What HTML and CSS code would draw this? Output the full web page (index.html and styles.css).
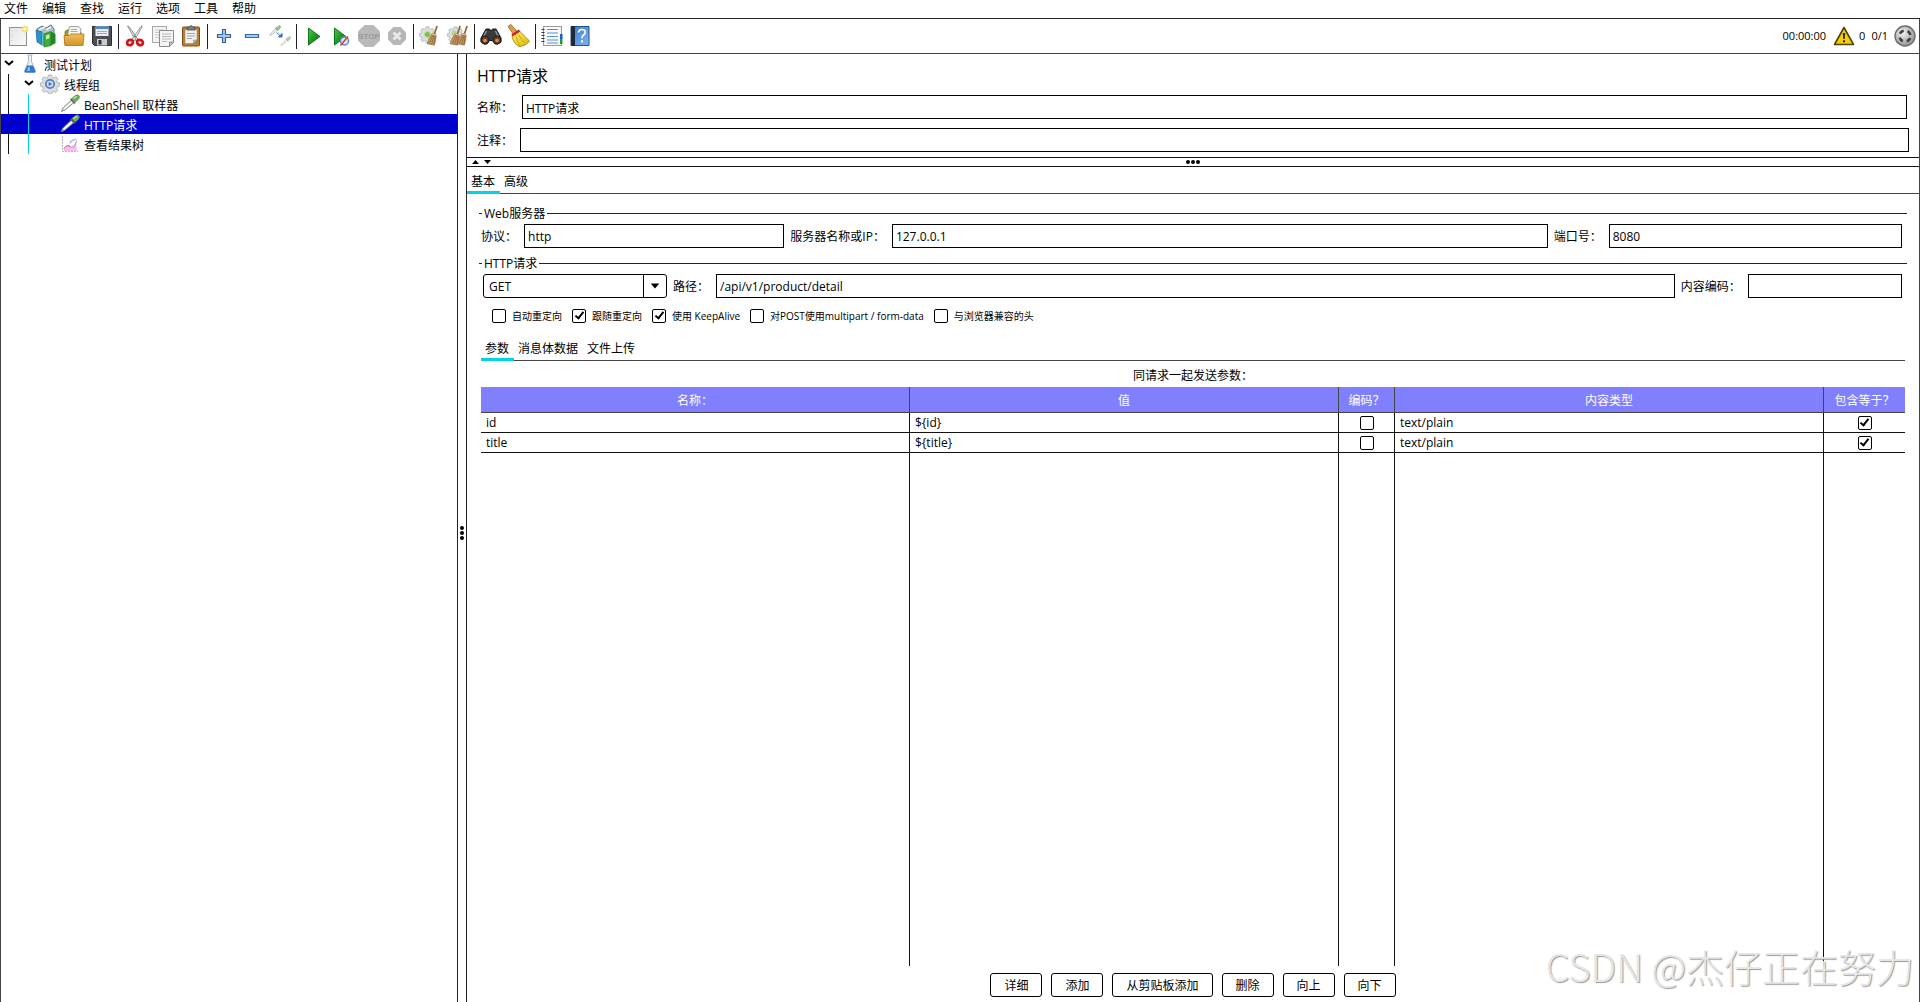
FILE: index.html
```html
<!DOCTYPE html>
<html lang="zh-CN">
<head>
<meta charset="utf-8">
<title>Apache JMeter</title>
<link rel="stylesheet" href="styles.css">
</head>
<body>
<nav class="menubar">
  <button type="button">文件</button>
  <button type="button">编辑</button>
  <button type="button">查找</button>
  <button type="button">运行</button>
  <button type="button">选项</button>
  <button type="button">工具</button>
  <button type="button">帮助</button>
</nav>

<svg class="defs" aria-hidden="true">
  <defs>
    <linearGradient id="paper" x1="0" y1="0" x2="1" y2="1"><stop offset="0" stop-color="#e4e4e4"/><stop offset="1" stop-color="#fafafa"/></linearGradient>
    <linearGradient id="green" x1="0" y1="0" x2="1" y2="1"><stop offset="0" stop-color="#5fc25a"/><stop offset=".5" stop-color="#1d9a24"/><stop offset="1" stop-color="#056b0c"/></linearGradient>
    <linearGradient id="folder" x1="0" y1="0" x2="0" y2="1"><stop offset="0" stop-color="#f0bf55"/><stop offset="1" stop-color="#d1942a"/></linearGradient>
    <linearGradient id="blue" x1="0" y1="0" x2="1" y2="1"><stop offset="0" stop-color="#3b78c8"/><stop offset="1" stop-color="#7db4f2"/></linearGradient>
    <linearGradient id="yellow" x1="0" y1="0" x2="1" y2="1"><stop offset="0" stop-color="#fff27a"/><stop offset="1" stop-color="#d9b300"/></linearGradient>
    <radialGradient id="steel" cx=".4" cy=".35" r=".7"><stop offset="0" stop-color="#f2f2f2"/><stop offset="1" stop-color="#8c8c8c"/></radialGradient>
    <symbol id="pipette" viewBox="0 0 20 20">
      <path d="M1.500 17.500 2.500 14.500 11.500 6 14 8.500 5 16z" fill="#d4d8d6" stroke="#7f8582" stroke-width=".9"/>
      <path d="M4 15 12.500 7.500" stroke="#fff" stroke-width="1.200"/>
      <path d="M10.500 5 15 9.500" stroke="#55645a" stroke-width="1.500"/>
      <path d="M11.500 4.500 15.500 1.500Q18 0 19.200 2 20 3.800 18.500 5.300L15.300 8.300z" fill="#6fab5c" stroke="#4a8440" stroke-width=".6"/>
      <path d="M13.500 4.500 17 2.300" stroke="#bfe3ae" stroke-width="1.300"/>
    </symbol>
    <symbol id="broom" viewBox="0 0 14 24">
      <path d="M12 1 9 10" stroke="#8d6232" stroke-width="1.800"/>
      <path d="M7 9 11 10.500Q11 17 9 22L1 20.500Q3 14 7 9z" fill="#c79a62" stroke="#8f6436" stroke-width=".7"/>
      <path d="M7.500 11 3.500 20M9 11 6 21M10 12 8.500 21.500" stroke="#7d562c" stroke-width=".7"/>
      <path d="M6.500 9.500 11.200 11" stroke="#e2c9a2" stroke-width="1.200"/>
    </symbol>
    <symbol id="gear" viewBox="0 0 20 20">
      <path d="M8.400 1h3.200l.5 2.300 1.700.7 2-1.300 2.200 2.300-1.300 2 .7 1.600 2.300.5v3l-2.300.5-.7 1.700 1.300 2-2.200 2.200-2-1.300-1.700.7-.5 2.300H8.400l-.5-2.300-1.700-.7-2 1.300L2 16.300l1.300-2-.7-1.700-2.300-.5v-3l2.300-.5.7-1.600L2 5l2.200-2.300 2 1.300 1.700-.7z" fill="#dcdee0" stroke="#a3a7ab" stroke-width=".8"/>
    </symbol>
  </defs>
</svg>

<header class="toolbar">
  <button type="button" aria-label="新建"><svg viewBox="0 0 24 24"><rect x="3.500" y="3.500" width="17" height="18" fill="url(#paper)" stroke="#8d8d8d"/><path d="M6 6v13" stroke="#c5c5c5" stroke-dasharray="1 4"/><circle cx="19" cy="5" r="3.500" fill="#f6e272" opacity=".85"/><circle cx="19" cy="5" r="1.500" fill="#fffbd0"/></svg></button>
  <button type="button" aria-label="模板"><svg viewBox="0 0 24 24"><path d="M3 5 8 2l4 2 5-3 3 4v6H4z" fill="#aebfc4" stroke="#64777d"/><path d="m5 6 6-3M12 6l5-3" stroke="#eef4f5" stroke-width="1.500"/><path d="M2 6l6 2v13l-5-3z" fill="#2a94c8" stroke="#17668f" stroke-width=".7"/><path d="M8 9h5v12l-5 1z" fill="#5eb8e0"/><path d="M10 10 17 7.500v14L10 23z" fill="#3fae38" stroke="#1e7a1c" stroke-width=".7"/><path d="M17 7.500 21.500 10v9L17 21.500z" fill="#1f8a22"/><path d="M12 11.500 15.500 10.300v4L12 15.500z" fill="#c9ecb7"/><path d="M20 19h3l-5 3z" fill="#999" opacity=".5"/></svg></button>
  <button type="button" aria-label="打开"><svg viewBox="0 0 24 24"><path d="M3 21V7.500l2-1.500h4l1 2h9v12z" fill="#c08a2b" stroke="#8f631a" stroke-width=".8"/><path d="M6 9 7.500 2.500H16L19 5l-1 7H6z" fill="#f4f4f4" stroke="#8b8b8b" stroke-width=".8"/><path d="M9 5.500h6M8.500 7.500h7" stroke="#aaa"/><path d="M2 11.500h5L9 10h13l-1 11.500H3z" fill="url(#folder)" stroke="#a8741d" stroke-width=".8"/></svg></button>
  <button type="button" aria-label="保存"><svg viewBox="0 0 24 24"><path d="M2.500 2.500h19v19h-17l-2-2z" fill="#4c5053" stroke="#2d3033"/><path d="M5.500 2.500h13v9.500h-13z" fill="#e9eef4"/><path d="M5.500 2.500h13v2.500h-13z" fill="#5187c9"/><path d="M7 7.500h10M7 9.500h10" stroke="#a5acb3"/><path d="M7 15h10v6.500H7z" fill="#c9cccf"/><path d="M8.500 16h3v4.500h-3z" fill="#303336"/></svg></button>
  <span class="sep"></span>
  <button type="button" aria-label="剪切"><svg viewBox="0 0 24 24"><path d="M4.500 2 6 2.500 15.500 16l-3 .5z" fill="#dfe1e2" stroke="#7b7f82" stroke-width=".8"/><path d="M19.500 2 18 2.500 8.500 16l3 .5z" fill="#eceeee" stroke="#7b7f82" stroke-width=".8"/><circle cx="12" cy="12.500" r=".9" fill="#555"/><ellipse cx="7" cy="18.500" rx="3" ry="2.500" fill="none" stroke="#d3151c" stroke-width="2.800" transform="rotate(-30 7 18.500)"/><ellipse cx="17" cy="18.500" rx="3" ry="2.500" fill="none" stroke="#d3151c" stroke-width="2.800" transform="rotate(30 17 18.500)"/></svg></button>
  <button type="button" aria-label="复制"><svg viewBox="0 0 24 24"><path d="M1.500 2.500h14v16h-14z" fill="#f3f3f3" stroke="#a3a3a3"/><path d="M4 6h9M4 8.500h9M4 11h9M4 13.500h9" stroke="#c9c9c9"/><path d="M8.500 6.500h14V18l-4 4.500h-10z" fill="#f3f3f3" stroke="#8d8d8d"/><path d="M11 10h9M11 12.500h9M11 15h9M11 17.500h5" stroke="#b9b9b9"/><path d="M22.500 18h-4v4.500z" fill="#cfcfcf" stroke="#777" stroke-width=".8"/></svg></button>
  <button type="button" aria-label="粘贴"><svg viewBox="0 0 24 24"><rect x="3.500" y="3" width="17" height="19" rx="1" fill="#bb7d29" stroke="#80501a"/><path d="M6 5.500h12V16l-3.500 3.500H6z" fill="#f1f1ef" stroke="#918d84" stroke-width=".6"/><path d="M8 9.500h8M8 12h8M8 14.500h5" stroke="#a2a2a0"/><path d="M18 16h-3.500v3.500z" fill="#c0c0bd" stroke="#777" stroke-width=".5"/><path d="M8 3h2Q12 0 14 3h2v3H8z" fill="#77817e" stroke="#454c49" stroke-width=".8"/></svg></button>
  <span class="sep"></span>
  <button type="button" aria-label="展开"><svg viewBox="0 0 24 24"><path d="M10.500 5.500h3v5h5v3h-5v5h-3v-5h-5v-3h5z" fill="#a9c8ec" stroke="#2f68ad" stroke-width="1.200"/></svg></button>
  <button type="button" aria-label="折叠"><svg viewBox="0 0 24 24"><path d="M5.500 10.500h13v3h-13z" fill="#a9c8ec" stroke="#2f68ad" stroke-width="1.200"/></svg></button>
  <button type="button" aria-label="切换"><svg viewBox="0 0 24 24"><g opacity=".8"><use href="#pipette" x="1" y="1" width="12" height="12"/></g><g opacity=".6"><use href="#pipette" x="12" y="12" width="11" height="11"/></g><path d="m8.500 8.500 4 3.500M14 9.500v3.500h-3.500z" stroke="#2f6fd0" fill="#2f6fd0"/></svg></button>
  <span class="sep"></span>
  <button type="button" aria-label="启动"><svg viewBox="0 0 24 24"><path d="M7.500 4v17L19 12.500z" fill="url(#green)" stroke="#0c7a14"/></svg></button>
  <button type="button" aria-label="无停顿启动"><svg viewBox="0 0 24 24"><path d="M5.500 4v17L17 12.500z" fill="url(#green)" stroke="#0c7a14"/><circle cx="15.500" cy="17" r="4" fill="#dfe9f8" stroke="#5a89cf" stroke-width="1.500"/><path d="m11.500 21.500 7.500-9" stroke="#d23a3a" stroke-width="1.500"/></svg></button>
  <button type="button" aria-label="停止" disabled><svg viewBox="0 0 24 24"><path d="M7.500 1h9L23 7.500v9L16.500 23h-9L1 16.500v-9z" fill="#b9b9b9"/><text x="12" y="15" text-anchor="middle" class="stop-word">STOP</text></svg></button>
  <button type="button" aria-label="关闭" disabled><svg viewBox="0 0 24 24"><path d="M8.500 3h7L21 8.500v7L15.500 21h-7L3 15.500v-7z" fill="#b7b7b7"/><path d="m8.500 8.500 7 7m0-7-7 7" stroke="#e9e9e9" stroke-width="2.800"/></svg></button>
  <span class="sep"></span>
  <button type="button" aria-label="清除"><svg viewBox="0 0 24 24"><use href="#gear" x="1" y="2" width="17" height="17"/><circle cx="9.500" cy="10.500" r="3" fill="#83c03c" stroke="#c3d9a8"/><use href="#broom" x="8" y="1" width="13" height="22"/></svg></button>
  <button type="button" aria-label="清除全部"><svg viewBox="0 0 24 24"><use href="#gear" x="1" y="2" width="17" height="17"/><circle cx="8" cy="9" r="2.500" fill="#b4d68c"/><use href="#broom" x="3" y="1" width="13" height="22"/><use href="#broom" x="10" y="1" width="13" height="22"/></svg></button>
  <span class="sep"></span>
  <button type="button" aria-label="查找"><svg viewBox="0 0 24 24"><path d="M7 5h3.500l1.500 2 1.500-2H17l5 9v4l-3 2h-3l-2.500-3.500h-3L8 20H5l-3-2v-4z" fill="#3b3b3d" stroke="#161618"/><path d="m7.500 7-3 6M16.500 7l3 6" stroke="#909396" stroke-width="1.500"/><circle cx="6" cy="16" r="3.800" fill="#6a3c24" stroke="#222" stroke-width="1.200"/><circle cx="18" cy="16" r="3.800" fill="#6a3c24" stroke="#222" stroke-width="1.200"/><circle cx="6" cy="16.500" r="1.800" fill="#d98a56"/><circle cx="18" cy="16.500" r="1.800" fill="#d98a56"/></svg></button>
  <button type="button" aria-label="重置查找"><svg viewBox="0 0 24 24"><path d="m1 2.500 3-2 6 7-3.500 3z" fill="#e09a4c" stroke="#a05e20" stroke-width=".8"/><path d="M5 12 12.500 7 22.500 17Q19 22 12 22.500 6 19 5 12z" fill="url(#yellow)" stroke="#9f7f00" stroke-width=".8"/><path d="M9 12q1 6 4 9.500M12 11q2 5 6 8" stroke="#c9a810" fill="none"/><path d="M5 11.500 12.500 6.500" stroke="#d3222a" stroke-width="2.600"/></svg></button>
  <span class="sep"></span>
  <button type="button" aria-label="函数助手"><svg viewBox="0 0 24 24"><rect x="3.500" y="2.500" width="18" height="19" fill="#f8f8f8" stroke="#9a9a9a"/><path d="M7 5.500h11M7 9h11M7 12.500h11M7 16h11M7 19h11" stroke="#5b90d8" stroke-width="1.200"/><path d="M1.500 5.500h3M1.500 8.500h3M1.500 11.500h3M1.500 14.500h3M1.500 17.500h3" stroke="#333" stroke-width="1.200"/><path d="M20 10h2.500v5H20z" fill="#1a5ed0"/><path d="M20 15h2.500v5H20z" fill="#17a02b"/></svg></button>
  <button type="button" aria-label="帮助"><svg viewBox="0 0 24 24"><path d="M3 2.500h18v19H3z" fill="url(#blue)" stroke="#24528f"/><path d="M3 2h4v20H3z" fill="#1f2a38"/><path d="M10.500 8.500Q10.700 5.500 14 5.500t3.200 2.800Q17.200 10 15.300 11.200 14 12.200 14 14.200" fill="none" stroke="#fff" stroke-width="1.700"/><rect x="13" y="16.300" width="2" height="2" fill="#fff"/></svg></button>
  <div class="status">
    <span class="clock">00:00:00</span>
    <svg class="warn" viewBox="0 0 22 20"><path d="M11 1.500 20.500 18.500h-19z" fill="#f7cd0a" stroke="#4f4300" stroke-width="1.600" stroke-linejoin="round"/><path d="M9.800 7h2.400l-.5 6h-1.400z" fill="#2f2800"/><rect x="10" y="14.300" width="2" height="2" fill="#2f2800"/></svg>
    <span class="errors">0</span>
    <span class="threads">0/1</span>
    <svg class="running" viewBox="0 0 22 22"><circle cx="11" cy="11" r="10" fill="url(#steel)" stroke="#6c6c6c" stroke-width="1.400"/><circle cx="11" cy="11" r="5.500" fill="none" stroke="#3f3f3f" stroke-width="2.600" stroke-dasharray="4.600 4.039" stroke-dashoffset="-2"/></svg>
  </div>
</header>

<main class="workspace">
  <aside class="tree">
    <div class="row level-0"><svg class="twist" viewBox="0 0 10 6"><path d="m1 1 4 3.500L9 1" fill="none" stroke="#000" stroke-width="2"/></svg><svg class="node" viewBox="0 0 20 20"><path d="M7.500 1h5M8.500 1v6.500L4.500 17q-.3 1.500 1 1.500h9q1.300 0 1-1.500L11.500 7.500V1" fill="#eaf1f8" stroke="#a4afbb" stroke-width=".9"/><path d="M7 11.500h6L15.300 17q.2 1.500-1 1.500H5.700Q4.500 18.500 4.700 17z" fill="#2d7bd1"/><path d="M8 13h2v4H7z" fill="#85bbf0"/></svg><span>测试计划</span></div>
    <div class="children depth-0">
      <div class="row level-1"><svg class="twist" viewBox="0 0 10 6"><path d="m1 1 4 3.500L9 1" fill="none" stroke="#000" stroke-width="2"/></svg><svg class="node" viewBox="0 0 20 20"><use href="#gear"/><circle cx="10" cy="10" r="4.200" fill="#c9dcf6" stroke="#5b7fb8" stroke-width="1.800"/><path d="M8.700 8v4l3.300-2z" fill="#3a6dbb"/></svg><span>线程组</span></div>
      <div class="children depth-1">
        <div class="row level-2"><svg class="node" viewBox="0 0 20 20"><use href="#pipette"/></svg><span>BeanShell 取样器</span></div>
        <div class="row level-2 selected"><svg class="node" viewBox="0 0 20 20"><use href="#pipette"/></svg><span>HTTP请求</span></div>
        <div class="row level-2"><svg class="node" viewBox="0 0 20 20"><path d="M2.500 2v15.500H18" fill="none" stroke="#b5b5c2" stroke-dasharray="2 1"/><path d="M4 17v-2.500q3-4.500 6-2 3 2 6-5l1 9.500z" fill="#f6bfe6"/><path d="M4 14.500q3-4.500 6-2" fill="none" stroke="#d34c96"/><path d="M9 11.500q5 5 7.500-4.500" fill="none" stroke="#b08fd6"/><path d="M10 9.500q1.500-4.500 6.500-4" fill="none" stroke="#9fc3ee" stroke-width="1.500"/></svg><span>查看结果树</span></div>
      </div>
    </div>
  </aside>
  <div class="splitter"><i></i><i></i><i></i></div>

  <section class="editor">
    <div class="heading">
      <h1>HTTP请求</h1>
      <div class="field name-field"><label for="name">名称：</label><input id="name" type="text" value="HTTP请求"></div>
      <div class="field note-field"><label for="note">注释：</label><input id="note" type="text"></div>
    </div>
    <div class="divider">
      <svg class="arrows" viewBox="0 0 20 6"><path d="M0 5h7L3.500 1zM12 1h7l-3.500 4z" fill="#000"/></svg>
      <span class="dots"><i></i><i></i><i></i></span>
    </div>
    <div class="tabs">
      <button type="button" class="active">基本</button>
      <button type="button">高级</button>
    </div>

    <div class="panel">
      <fieldset>
        <legend>Web服务器</legend>
        <div class="line server">
          <label for="protocol">协议：</label><input id="protocol" class="w-protocol" type="text" value="http">
          <label for="host">服务器名称或IP：</label><input id="host" class="w-host" type="text" value="127.0.0.1">
          <label for="port">端口号：</label><input id="port" class="w-port" type="text" value="8080">
        </div>
      </fieldset>
      <fieldset>
        <legend>HTTP请求</legend>
        <div class="line request">
          <div class="combo">
            <select aria-label="方法"><option>GET</option></select>
            <svg viewBox="0 0 23 22"><path d="M7 8.500h9l-4.500 5z" fill="#000"/></svg>
          </div>
          <label for="path">路径：</label><input id="path" class="w-path" type="text" value="/api/v1/product/detail">
          <label for="encoding">内容编码：</label><input id="encoding" class="w-encoding" type="text">
        </div>
      </fieldset>
      <div class="options">
        <label><input type="checkbox">自动重定向</label>
        <label><input type="checkbox" checked>跟随重定向</label>
        <label><input type="checkbox" checked>使用 KeepAlive</label>
        <label><input type="checkbox">对POST使用multipart / form-data</label>
        <label><input type="checkbox">与浏览器兼容的头</label>
      </div>

      <div class="inner">
        <div class="tabs">
          <button type="button" class="active">参数</button>
          <button type="button">消息体数据</button>
          <button type="button">文件上传</button>
        </div>
        <p class="caption">同请求一起发送参数：</p>
        <div class="grid">
          <table>
            <colgroup><col><col><col class="narrow"><col><col class="last"></colgroup>
            <thead>
              <tr><th>名称：</th><th>值</th><th>编码？</th><th>内容类型</th><th>包含等于？</th></tr>
            </thead>
            <tbody>
              <tr><td>id</td><td>${id}</td><td class="tick"><input type="checkbox" aria-label="编码 id"></td><td>text/plain</td><td class="tick"><input type="checkbox" aria-label="包含等于 id" checked></td></tr>
              <tr><td>title</td><td>${title}</td><td class="tick"><input type="checkbox" aria-label="编码 title"></td><td>text/plain</td><td class="tick"><input type="checkbox" aria-label="包含等于 title" checked></td></tr>
              <tr class="filler"><td></td><td></td><td></td><td></td><td></td></tr>
            </tbody>
          </table>
        </div>
        <div class="actions">
          <button type="button">详细</button>
          <button type="button">添加</button>
          <button type="button">从剪贴板添加</button>
          <button type="button">删除</button>
          <button type="button">向上</button>
          <button type="button">向下</button>
        </div>
      </div>
    </div>
  </section>
</main>
<div class="watermark">CSDN @杰仔正在努力</div>
</body>
</html>
```
FILE: styles.css
```css
*, *::before { box-sizing: border-box; }

body {
  margin: 0;
  height: 100vh;
  display: flex;
  flex-direction: column;
  background: #fff;
  color: #000;
  font: 12px/16px "Open Sans", "Noto Sans CJK SC", sans-serif;
  overflow: hidden;
}

button, input, select {
  font: inherit;
  color: inherit;
  margin: 0;
}

.defs { position: absolute; width: 0; height: 0; }

/* menu */
.menubar {
  display: flex;
  gap: 14px;
  height: 19px;
  padding: 0 4px;
  border-bottom: 1px solid #222;
}
.menubar button { border: 0; padding: 0; background: none; }

/* toolbar */
.toolbar {
  display: flex;
  align-items: center;
  height: 35px;
  padding: 0 3px;
  border: 1px solid #444;
  border-top: 0;
}
.toolbar button {
  width: 28px;
  height: 28px;
  padding: 2px;
  border: 0;
  background: none;
}
.toolbar button svg { display: block; width: 24px; height: 24px; fill: none; }
.stop-word { font: bold 8px/8px "Liberation Sans", sans-serif; fill: #999; }
.sep {
  width: 5px;
  height: 25px;
  border-left: 2px solid #fff;
  background: linear-gradient(to right, #222 1px, transparent 1px);
}
.status {
  display: flex;
  align-items: center;
  margin-left: auto;
  gap: 6px;
  font-size: 11px;
}
.status .warn { width: 22px; height: 20px; margin-left: 1px; }
.status .running { width: 22px; height: 22px; }
.status .errors { margin-left: -2px; }

/* tree */
.workspace {
  flex: 1;
  min-height: 0;
  display: flex;
  border: solid #444;
  border-width: 0 1px;
}
.tree { width: 456px; flex: none; }
.row {
  display: flex;
  align-items: center;
  height: 20px;
}
.row span { padding-top: 3px; }
.level-0 { padding-left: 3px; }
.level-1 { padding-left: 23px; }
.level-2 { padding-left: 59px; }
.twist { width: 10px; height: 6px; margin: 0 6px 2px 0; }
.node { width: 20px; height: 20px; margin-right: 4px; fill: none; }
.selected { background: #0000ce; color: #fff; }
.children { position: relative; }
.children::before {
  content: "";
  position: absolute;
  top: 0;
  bottom: 0;
  width: 1px;
}
.depth-0::before { left: 7px; background: #111; }
.depth-1::before { left: 27px; background: #00d5e6; }

.splitter {
  flex: none;
  width: 10px;
  display: flex;
  flex-direction: column;
  align-items: center;
  justify-content: center;
  gap: 1px;
  padding-top: 10px;
  border: solid #222;
  border-width: 0 1px;
}
.splitter i, .dots i {
  width: 4px;
  height: 4px;
  border-radius: 50%;
  background: #000;
}

/* editor */
.editor {
  flex: 1;
  min-width: 0;
  display: flex;
  flex-direction: column;
}
.heading { padding: 12px 10px 5px; }
h1 { margin: 0 0 9px; font-size: 16px; line-height: 20px; font-weight: 400; }
.field { display: flex; align-items: center; }
.field label { width: 43px; padding-top: 2px; }
.name-field { margin: 0 2px 9px 0; }
.name-field label { width: 45px; }

input[type="text"] {
  min-width: 0;
  height: 24px;
  padding: 1px 3px 0;
  border: 1px solid #000;
  border-radius: 0;
  background: #fff;
}
.field input { flex: 1; }

.divider {
  display: flex;
  align-items: center;
  height: 10px;
  padding: 0 26px 0 5px;
  border: solid #111;
  border-width: 1px 0;
}
.arrows { width: 20px; height: 6px; }
.dots { display: flex; gap: 1px; margin: 0 auto; }

.tabs { display: flex; border-bottom: 1px solid #444; }
.tabs button {
  padding: 7px 5px 4px 4px;
  margin-bottom: -1px;
  border: 0;
  background: none;
}
.tabs .active { border-bottom: 3px solid #00d5e6; padding-bottom: 1px; }

.panel {
  flex: 1;
  min-height: 0;
  display: flex;
  flex-direction: column;
  padding: 10px 12px 0;
}
fieldset {
  min-width: 0;
  margin: 0;
  padding: 0;
  border: 0;
  border-top: 1px solid #222;
}
legend { margin-left: 3px; padding: 2px 2px 0; }
.line { display: flex; align-items: center; padding: 2px 5px 6px 2px; }
.line label { margin: 0 7px 0 6px; padding-top: 2px; flex: none; }
.server label:first-child { margin-left: 0; }
.request { padding-left: 4px; }
.w-protocol { flex: 260 1 260px; }
.w-host { flex: 655 1 655px; }
.w-port { flex: 293 1 293px; }
.w-path { flex: 957 1 957px; }
.w-encoding { flex: 154 1 154px; }

.combo {
  display: flex;
  flex: none;
  width: 184px;
  height: 24px;
  border: 1px solid #000;
  border-radius: 3px;
}
.combo select {
  flex: 1;
  appearance: none;
  padding: 1px 5px 0;
  border: 0;
  background: none;
}
.combo svg { width: 23px; height: 22px; border-left: 1px solid #000; }

.options {
  display: flex;
  gap: 10px;
  padding: 4px 13px;
  font-size: 10px;
}
.options label { display: flex; align-items: center; gap: 6px; }

input[type="checkbox"] {
  appearance: none;
  display: flex;
  justify-content: center;
  width: 14px;
  height: 14px;
  border: 1px solid #000;
  border-radius: 2px;
  background: #fff;
}
input[type="checkbox"]:checked::before {
  content: "";
  width: 5px;
  height: 9px;
  border: solid #000;
  border-width: 0 2px 2px 0;
  transform: rotate(38deg);
}

.inner {
  flex: 1;
  min-height: 0;
  display: flex;
  flex-direction: column;
  padding: 6px 2px 0;
}
.caption { margin: 0; padding: 7px 0 3px; text-align: center; }
.grid { flex: 1; min-height: 0; }
table {
  width: 100%;
  height: 100%;
  table-layout: fixed;
  border-collapse: separate;
  border-spacing: 0;
}
.narrow { width: 56px; }
.last { width: 81px; }
th {
  height: 26px;
  padding: 2px 0 0;
  border: solid #444;
  border-width: 0 1px 1px 0;
  background: #8080ff;
  color: #fff;
  font-weight: 400;
}
td {
  height: 20px;
  padding: 1px 5px 0;
  border: solid #111;
  border-width: 0 1px 1px 0;
}
th:last-child, td:last-child { border-right: 0; }
.tick { padding: 0; }
.tick input { margin: 0 auto; }
.filler td { height: auto; border-bottom: 0; }

.actions {
  display: flex;
  justify-content: center;
  gap: 9px;
  padding: 7px 0 5px;
}
.actions button {
  height: 24px;
  padding: 2px 13px 0;
  border: 1px solid #000;
  border-radius: 3px;
  background: #fff;
}

.watermark {
  position: absolute;
  right: 6px;
  bottom: 12px;
  color: #e6e6e6;
  font: 300 38px/48px "Noto Sans CJK SC", sans-serif;
  text-shadow: 1px 1px 1px #999;
  pointer-events: none;
}
```
